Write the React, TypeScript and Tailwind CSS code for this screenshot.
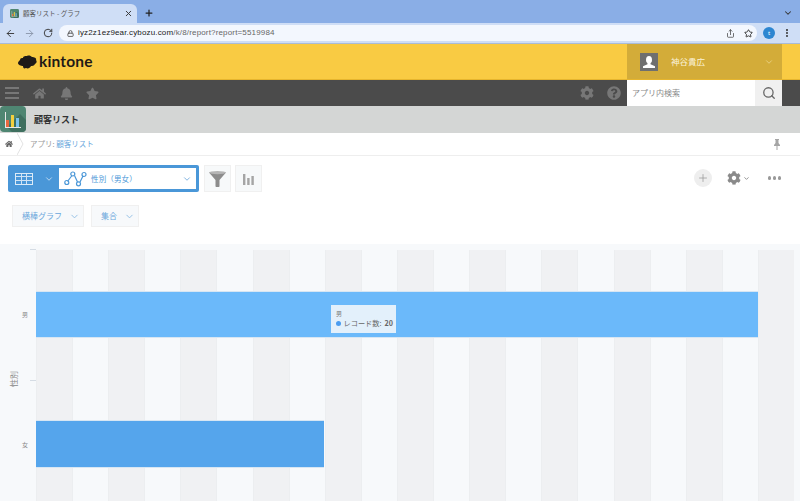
import React from "react";
import {
  ArrowLeft,
  ArrowRight,
  ChevronDown,
  EllipsisVertical,
  Lock,
  Plus,
  RotateCw,
  Search,
  Share,
  Star,
  X,
} from "lucide-react";
import { FaBell, FaCog, FaHome, FaQuestionCircle, FaStar } from "react-icons/fa";

const jp = "font-['Noto_Sans_CJK_JP','Noto_Sans',sans-serif]";

function GraphIcon() {
  return (
    <svg width="23" height="16" viewBox="0 0 23 16" fill="none" stroke="#4a97d8" strokeWidth="1.2">
      <path d="M3.5 10.5 8 4.5M10.5 4.5 13.5 11M16 11 19 5" />
      <circle cx="2.8" cy="11.5" r="2" />
      <circle cx="8.8" cy="3" r="2" />
      <circle cx="14.5" cy="12.8" r="2" />
      <circle cx="20" cy="3.5" r="2" />
    </svg>
  );
}

function AppIcon({ size }: { size: number }) {
  return (
    <svg width={size} height={size} viewBox="0 0 26 26">
      <rect width="26" height="26" rx="4" fill="#4f8672" />
      <path d="M7 21 20 8 26 14V22a4 4 0 0 1-4 4H12Z" fill="#3f6f5f" />
      <rect x="6" y="14" width="3" height="7" fill="#e8693f" />
      <rect x="11" y="9" width="3" height="12" fill="#f4d03f" />
      <rect x="16" y="12" width="3" height="9" fill="#7cc4ee" />
      <rect x="5" y="6" width="1" height="16" fill="#e8e8e8" />
      <rect x="5" y="21" width="16" height="1" fill="#e8e8e8" />
    </svg>
  );
}

function Header() {
  return (
    <div>
      {/* Browser */}
      <div className="flex h-[23px] items-end bg-[#8aaee6] pl-[3px]">
        <div className="flex h-[19px] w-[134px] items-center rounded-t-[6px] bg-[#cfdef6] pl-[7px] pr-[4px]">
          <AppIcon size={9} />
          <span className={`ml-[4px] text-[6.5px] text-[#555] ${jp}`}>顧客リスト - グラフ</span>
          <X className="ml-auto h-[9px] w-[9px] text-[#333]" strokeWidth={2.5} />
        </div>
        <Plus className="mb-[5px] ml-[7px] h-[10px] w-[10px] text-[#222]" strokeWidth={3} />
        <ChevronDown className="mb-[5px] ml-auto mr-[7px] h-[10px] w-[10px] text-[#333]" strokeWidth={2.5} />
      </div>
      <div className="flex h-[20px] items-center bg-[#cfdef6] pl-[5px] pr-[6px]">
        <ArrowLeft className="h-[11px] w-[11px] text-[#333]" strokeWidth={2} />
        <ArrowRight className="ml-[8px] h-[11px] w-[11px] text-[#8a96aa]" strokeWidth={2} />
        <RotateCw className="ml-[8px] h-[10px] w-[10px] text-[#333]" strokeWidth={2.2} />
        <div className="ml-[6px] flex h-[16px] w-[698px] items-center rounded-full bg-[#f3f7fe] pl-[8px] pr-[4px]">
          <Lock className="h-[7px] w-[7px] text-[#555]" strokeWidth={3} />
          <span className="ml-[4px] font-['Liberation_Sans',sans-serif] text-[8px] tracking-[0.02em] text-[#222]">
            iyz2z1ez9ear.cybozu.com
            <span className="text-[#666]">/k/8/report?report=5519984</span>
          </span>
          <Share className="ml-auto h-[9px] w-[9px] text-[#444]" />
          <Star className="ml-[9px] h-[9px] w-[9px] text-[#333]" strokeWidth={2.5} />
        </div>
        <div className="ml-[6px] flex h-[12px] w-[12px] items-center justify-center rounded-full bg-[#2d86d1] text-[6px] text-white">
          t
        </div>
        <EllipsisVertical className="ml-[7px] h-[10px] w-[10px] text-[#333]" strokeWidth={3} />
      </div>

      {/* kintone bar */}
      <div className="flex h-[37px] items-stretch border-t border-b border-[#a9bbd6] border-b-[#e6b52e] bg-[#f9cb43] pl-[18px] pr-[18px]">
        <div className="flex items-center">
          <svg width="19" height="14" viewBox="0 0 19 14">
            <path d="M2 5C2 3 4 3 5 3c0-2 3-2 4-2 2-1 4 0 5 1 2 0 5 1 4 3 1 1 1 3-1 4-1 2-3 2-4 2-1 2-3 3-5 2-2 1-3 0-3-2C3 11 0 10 0 8c0-1 1-2 2-3Z" fill="#1f1a17" />
          </svg>
          <span className="ml-[2px] font-['Lato',sans-serif] text-[15.5px] font-bold tracking-[0.01em] text-[#1f1a17]">
            kintone
          </span>
        </div>
        <div className="ml-auto flex w-[155px] items-center bg-[#d3ac39] pl-[13px] pr-[8px]">
          <svg width="18" height="18" viewBox="0 0 18 18">
            <rect width="18" height="18" fill="#6f6f6f" />
            <ellipse cx="9" cy="6.8" rx="3" ry="3.8" fill="#fff" />
            <path d="M7.5 10h3v1.2l4.5 2V15H3v-1.8l4.5-2Z" fill="#fff" />
          </svg>
          <span className={`ml-[13px] text-[8.5px] text-[#fbf3d8] ${jp}`}>神谷貴広</span>
          <ChevronDown className="ml-auto h-[10px] w-[10px] text-[#ecd58a]" />
        </div>
      </div>

      {/* global nav */}
      <div className="flex h-[26px] items-center bg-[#4b4b4b] pl-[5px] pr-[18px] text-[#777]">
        <div className="flex w-[14px] flex-col gap-[3px]">
          <div className="h-[2px] bg-[#777]" />
          <div className="h-[2px] bg-[#777]" />
          <div className="h-[2px] bg-[#777]" />
        </div>
        <FaHome className="ml-[14px] h-[13px] w-[13px]" />
        <FaBell className="ml-[14px] h-[13px] w-[13px]" />
        <FaStar className="ml-[13px] h-[13px] w-[13px]" />
        <FaCog className="ml-auto h-[14px] w-[14px]" />
        <FaQuestionCircle className="ml-[13px] h-[14px] w-[14px]" />
        <div className="ml-[6px] flex h-full w-[155px] items-stretch bg-white">
          <span className={`flex flex-1 items-center pl-[5px] text-[8px] text-[#8a8a8a] ${jp}`}>アプリ内検索</span>
          <div className="flex w-[27px] items-center justify-center bg-[#f0f0f0]">
            <Search className="h-[14px] w-[14px] text-[#666]" strokeWidth={2.2} />
          </div>
        </div>
      </div>

      {/* app title */}
      <div className="relative flex h-[27px] items-center bg-[#d4d6d5] pl-[34px]">
        <div className="absolute left-0 top-0">
          <AppIcon size={26} />
        </div>
        <span className={`text-[9px] font-bold text-[#333] ${jp}`}>顧客リスト</span>
      </div>

      {/* breadcrumb */}
      <div className="flex h-[23px] items-center border-b border-[#eeeeee] bg-white pl-[5px] pr-[19px]">
        <FaHome className="h-[8px] w-[8px] text-[#666]" />
        <svg className="ml-[4px]" width="7" height="22" viewBox="0 0 7 22" fill="none" stroke="#e2e2e2">
          <path d="M0 0 6 11 0 22" />
        </svg>
        <span className={`ml-[6px] text-[7.5px] text-[#999] ${jp}`}>
          アプリ: <span className="text-[#6ba7dc]">顧客リスト</span>
        </span>
        <svg className="ml-auto" width="8" height="11" viewBox="0 0 8 11" fill="#a5a5a5">
          <path d="M2 0h4v1H5.5v3L7 6v1H4.5v4h-1V7H1V6l1.5-2V1H2Z" />
        </svg>
      </div>
    </div>
  );
}

function Toolbar() {
  return (
    <div className="h-[88px] bg-white pl-[8px] pr-[19px]">
      <div className="flex items-start pt-[9px]">
        <div className="flex h-[27px] w-[191px] items-center rounded-[2px] bg-[#4a97d8] py-[3px] pr-[3px]">
          <div className="flex w-[51px] items-center pl-[7px]">
            <div className="grid h-[12px] w-[18px] grid-cols-3 gap-[1px] border border-[#dcebf7] bg-[#cfe3f5]">
              {[0, 1, 2, 3, 4, 5, 6, 7, 8].map((i) => (
                <div key={i} className="bg-[#4a97d8]" />
              ))}
            </div>
            <ChevronDown className="ml-[11px] h-[10px] w-[10px] text-[#cfe3f5]" />
          </div>
          <div className="flex h-full flex-1 items-center bg-white pl-[5px] pr-[4px]">
            <GraphIcon />
            <span className={`ml-[4px] text-[7.5px] tracking-[0.02em] text-[#4a97d8] ${jp}`}>性別（男女）</span>
            <ChevronDown className="ml-auto h-[10px] w-[10px] text-[#6ba7dc]" />
          </div>
        </div>
        <div className="ml-[5px] flex h-[27px] w-[27px] items-center justify-center border border-[#f0f0f0] bg-[#f7f9fa]">
          <svg width="17" height="16" viewBox="0 0 17 16">
            <path d="M0 1.5h17L10.5 9v6.2a.8.8 0 0 1-.8.8H7.3a.8.8 0 0 1-.8-.8V9Z" fill="#8c8c8c" />
            <ellipse cx="8.5" cy="1.6" rx="8.5" ry="1.6" fill="#b5b5b5" />
          </svg>
        </div>
        <div className="ml-[4px] flex h-[27px] w-[27px] items-center justify-center border border-[#f0f0f0] bg-[#f7f9fa]">
          <svg width="11" height="12" viewBox="0 0 11 12" fill="#a5a5a5">
            <rect x="0" y="1" width="2.4" height="11" />
            <rect x="4.2" y="5" width="2.4" height="7" />
            <rect x="8.4" y="3" width="2.4" height="9" />
          </svg>
        </div>
        <div className="ml-auto mt-[4px] flex items-center">
          <div className="flex h-[18px] w-[18px] items-center justify-center rounded-full bg-[#eeeeee]">
            <Plus className="h-[12px] w-[12px] text-[#999]" strokeWidth={1.5} />
          </div>
          <FaCog className="ml-[15px] h-[14px] w-[14px] text-[#8a8a8a]" />
          <ChevronDown className="ml-[2px] h-[7px] w-[7px] text-[#888]" strokeWidth={3} />
          <div className="ml-[18px] flex gap-[1.5px]">
            <div className="h-[3.5px] w-[3.5px] rounded-full bg-[#999]" />
            <div className="h-[3.5px] w-[3.5px] rounded-full bg-[#999]" />
            <div className="h-[3.5px] w-[3.5px] rounded-full bg-[#999]" />
          </div>
        </div>
      </div>
      <div className="mt-[13px] flex gap-[7px] pl-[4px]">
        <div className="flex h-[22px] w-[72px] items-center border border-[#f0f0f0] bg-[#f7f9fb] pl-[9px]">
          <span className={`text-[8px] text-[#6ba7dc] ${jp}`}>横棒グラフ</span>
          <ChevronDown className="ml-[7px] h-[11px] w-[11px] text-[#8fbde4]" />
        </div>
        <div className="flex h-[22px] w-[48px] items-center border border-[#f0f0f0] bg-[#f7f9fb] pl-[9px]">
          <span className={`text-[8px] text-[#6ba7dc] ${jp}`}>集合</span>
          <ChevronDown className="ml-[7px] h-[11px] w-[11px] text-[#8fbde4]" />
        </div>
      </div>
    </div>
  );
}

function Chart() {
  const stripes = [0, 1, 2, 3, 4, 5, 6, 7, 8, 9];
  return (
    <div className="relative h-[257px] overflow-hidden bg-[#f7f9fb]">
      {/* stripes */}
      <div className="ml-[36px] flex h-full w-[758px] pt-[6px]">
        {stripes.map((i) => (
          <div key={i} className="flex w-[72.2px]">
            <div className="flex-1 border-l border-[#eceef0] bg-[#f0f1f3]" />
            <div className="flex-1 border-l border-[#eceef0]" />
          </div>
        ))}
        <div className="flex-1 border-l border-[#eceef0] bg-[#f0f1f3]" />
      </div>

      {/* bars */}
      <div className="absolute left-[36px] top-[47px] h-[47px] w-[722px] border-y border-[#d7e6f3] bg-[#6bb9fa]" />
      <div className="absolute left-[36px] top-[176px] h-[48px] w-[288px] border-y border-[#d7e6f3] bg-[#55a5ec]" />

      {/* axis */}
      <div className="absolute left-[30px] top-[5px] h-px w-[6px] bg-[#d5dce4]" />
      <div className="absolute left-[30px] top-[136px] h-px w-[6px] bg-[#d5dce4]" />
      <span className={`absolute left-[22px] top-[66px] text-[6px] text-[#888] ${jp}`}>男</span>
      <span className={`absolute left-[22px] top-[196px] text-[6px] text-[#888] ${jp}`}>女</span>
      <span className={`absolute left-[6px] top-[129px] -rotate-90 text-[8px] text-[#888] ${jp}`}>性別</span>

      {/* tooltip */}
      <div className="absolute left-[331px] top-[61px] h-[28px] w-[65px] bg-[#e3f0fb] pl-[5px] pt-[4px]">
        <div className={`text-[6px] leading-[9px] text-[#777] ${jp}`}>男</div>
        <div className={`flex items-center text-[7.2px] leading-[11px] text-[#666] ${jp}`}>
          <div className="mr-[3px] h-[4.5px] w-[4.5px] rounded-full bg-[#4a9cf0]" />
          レコード数:<span className="ml-[3px] font-bold">20</span>
        </div>
      </div>
    </div>
  );
}

export default function App() {
  return (
    <div className="h-[501px] w-[800px] overflow-hidden bg-white">
      <Header />
      <Toolbar />
      <Chart />
    </div>
  );
}
